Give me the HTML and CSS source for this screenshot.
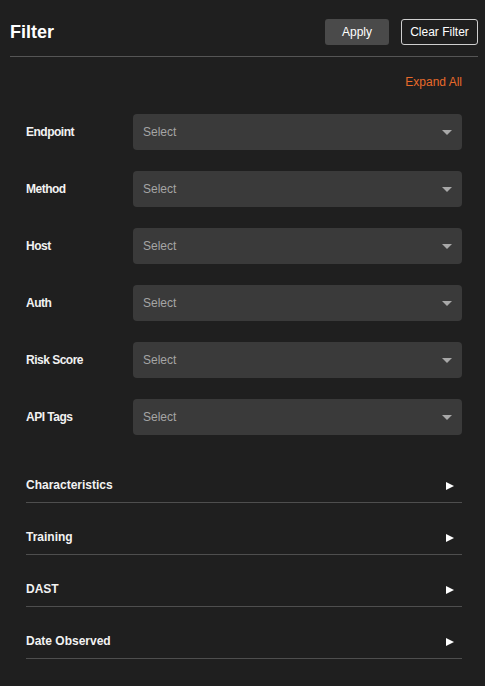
FILE: index.html
```html
<!DOCTYPE html>
<html lang="en">
<head>
<meta charset="utf-8">
<title>Filter</title>
<link rel="stylesheet" href="styles.css">
</head>
<body>
<div class="panel">
  <header class="header">
    <h1 class="title">Filter</h1>
    <div class="actions">
      <button class="btn btn-apply">Apply</button>
      <button class="btn btn-clear">Clear Filter</button>
    </div>
  </header>
  <div class="content">
    <div class="expand-row"><a class="expand-all">Expand All</a></div>
    <div class="fields">
      <div class="field"><span class="label">Endpoint</span><div class="select"><span class="placeholder">Select</span><span class="caret"></span></div></div>
      <div class="field"><span class="label">Method</span><div class="select"><span class="placeholder">Select</span><span class="caret"></span></div></div>
      <div class="field"><span class="label">Host</span><div class="select"><span class="placeholder">Select</span><span class="caret"></span></div></div>
      <div class="field"><span class="label">Auth</span><div class="select"><span class="placeholder">Select</span><span class="caret"></span></div></div>
      <div class="field"><span class="label">Risk Score</span><div class="select"><span class="placeholder">Select</span><span class="caret"></span></div></div>
      <div class="field"><span class="label">API Tags</span><div class="select"><span class="placeholder">Select</span><span class="caret"></span></div></div>
    </div>
    <div class="sections">
      <div class="section"><span class="section-title">Characteristics</span><span class="arrow"></span></div>
      <div class="section"><span class="section-title">Training</span><span class="arrow"></span></div>
      <div class="section"><span class="section-title">DAST</span><span class="arrow"></span></div>
      <div class="section"><span class="section-title">Date Observed</span><span class="arrow"></span></div>
    </div>
  </div>
</div>
</body>
</html>
```
FILE: styles.css
```css
html, body {
  margin: 0;
  padding: 0;
  background: #1f1f1f;
  font-family: "Liberation Sans", Arial, sans-serif;
  color: #f2f2f2;
}
.panel {
  width: 485px;
  min-height: 686px;
  box-sizing: border-box;
}
.header {
  margin: 0 7px 0 10px;
  padding: 19px 0 11px;
  border-bottom: 1px solid #555;
  display: flex;
  align-items: center;
  justify-content: space-between;
}
.title {
  margin: 0;
  font-size: 18px;
  font-weight: bold;
  line-height: 26px;
  color: #fff;
}
.actions {
  display: flex;
  gap: 12px;
}
.btn {
  height: 26px;
  box-sizing: border-box;
  font-family: "Liberation Sans", Arial, sans-serif;
  font-size: 12px;
  color: #fff;
  border-radius: 3px;
  padding: 0;
  cursor: pointer;
}
.btn-apply {
  width: 64px;
  background: #4a4a4a;
  border: none;
}
.btn-clear {
  width: 77px;
  background: #1f1f1f;
  border: 1px solid #cfcfcf;
}
.content {
  padding: 0 23px 0 26px;
}
.expand-row {
  display: flex;
  justify-content: flex-end;
  margin-top: 18px;
}
.expand-all {
  font-size: 12px;
  line-height: 14px;
  color: #e8692a;
  cursor: pointer;
}
.fields {
  margin-top: 25px;
  display: flex;
  flex-direction: column;
  gap: 21px;
}
.field {
  display: flex;
  align-items: center;
}
.label {
  width: 107px;
  flex: none;
  font-size: 12px;
  letter-spacing: -0.5px;
  font-weight: bold;
  color: #f2f2f2;
}
.select {
  flex: 1;
  height: 36px;
  background: #3a3a3a;
  border-radius: 4px;
  display: flex;
  align-items: center;
  justify-content: space-between;
  padding: 0 10px 0 10px;
}
.placeholder {
  font-size: 12px;
  color: #a5a5a5;
}
.caret {
  width: 0;
  height: 0;
  border-left: 5px solid transparent;
  border-right: 5px solid transparent;
  border-top: 5px solid #a8a8a8;
}
.sections {
  margin-top: 16px;
}
.section {
  display: flex;
  justify-content: space-between;
  align-items: center;
  padding: 27px 8px 10px 0;
  border-bottom: 1px solid #4e4e4e;
  line-height: 14px;
}
.section-title {
  font-size: 12px;
  font-weight: bold;
  color: #f2f2f2;
}
.arrow {
  width: 0;
  height: 0;
  border-top: 4px solid transparent;
  border-bottom: 4px solid transparent;
  border-left: 8px solid #fff;
  margin-top: 1px;
}
```
